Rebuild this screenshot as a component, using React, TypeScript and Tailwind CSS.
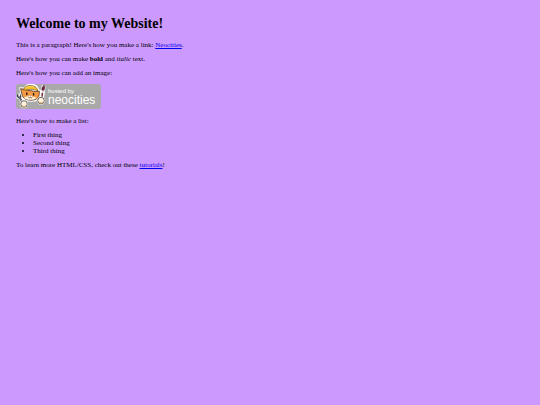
function NeocitiesBadge() {
  return (
    <svg width="85" height="25" viewBox="0 0 85 25" role="img" aria-label="hosted by neocities">
      <rect width="85" height="25" rx="3" fill="#a9a9a9" />

      {/* wrench */}
      <path d="M1.5 10l1 3 2 1 3 5" fill="none" stroke="#fff" strokeWidth="4" strokeLinejoin="round" />
      <path d="M1.5 10.2v2l1.8 1.6 1.9-1.4-.6-2M3.6 13.5l3.6 6" fill="none" stroke="#3c3a48" strokeWidth="1.8" />
      <path d="M2 12.2l1.6 1.2 3.2 5.4" fill="none" stroke="#9293a6" strokeWidth=".8" />

      {/* brush */}
      <path d="M27.4 3l-1.6 12" stroke="#fff" strokeWidth="4.2" strokeLinecap="round" />
      <path d="M28.2 1.2c-1.8 1-2.8 3.2-2.2 5.2l1.8.2c1-1.4 1.2-3.6.4-5.4z" fill="#7a2440" stroke="#2c1a26" strokeWidth=".5" />
      <path d="M26.8 6.5l-.4 3" stroke="#d9c4c4" strokeWidth="1.6" />
      <path d="M26.4 9l-.6 6" stroke="#6e2634" strokeWidth="1.5" />

      {/* head */}
      <path d="M4 4l4.4.4C9.5 1.6 12 .3 15.4.5c3.8.3 6.4 2.6 7 5.6l1.8.4-.4 5.5c-.8 3.6-4.4 5.3-9.4 5-5-.2-8.4-2.6-9-6.6z" fill="#fff" stroke="#fff" strokeWidth="1.6" strokeLinejoin="round" />
      <path d="M4.6 4.6l4.2 1 10.8 2 3.8-.4-.4 4.6c-.8 3-4 4.6-8.8 4.4-4.6-.2-7.6-2.2-8.2-5.6z" fill="#f39a42" stroke="#3a241a" strokeWidth=".7" strokeLinejoin="round" />
      <path d="M8 14c1-1.4 2.8-1.8 4.4-1.4l1.8-2.2 2.2 2.4c1.6-.2 3 .2 4.2 1.2-1.6 1.4-4 1.9-6.4 1.8-2.6-.1-4.8-.6-6.2-1.8z" fill="#fff3dd" />
      <path d="M7.4 5.8C8 3 11 1.2 15 1.5c4 .2 6.4 2.4 6.9 5.5-2.4-1.1-4.6-1.7-7-1.7-2.8 0-4.6 1.1-7.5.5z" fill="#f4c430" stroke="#60401c" strokeWidth=".6" />
      <path d="M10 4c2-1.6 5-2 7.8-1.1" fill="none" stroke="#ffdf6a" strokeWidth=".7" />
      <path d="M10.8 9v1.5M17.6 9.6v1.5" stroke="#21151a" strokeWidth="1.4" strokeLinecap="round" />
      <path d="M13.3 11.6h2l-1 1z" fill="#8a343a" />
      <path d="M12.5 13.4c.8.7 1.5.4 1.8-.2.4.7 1.2.9 1.9.2" fill="none" stroke="#3a241a" strokeWidth=".7" />

      {/* paws */}
      <circle cx="8" cy="20" r="4.2" fill="#fff" />
      <circle cx="8" cy="20" r="3.3" fill="#fff3df" stroke="#33251f" strokeWidth=".7" />
      <path d="M6.2 21.5c.8 1 2.6 1.2 3.6.2" fill="none" stroke="#e9a765" strokeWidth=".9" />
      <circle cx="25" cy="16.6" r="4.2" fill="#fff" />
      <circle cx="25" cy="16.6" r="3.3" fill="#fff3df" stroke="#33251f" strokeWidth=".7" />
      <path d="M23.4 18c.8 1 2.6 1 3.4 0" fill="none" stroke="#e9a765" strokeWidth=".9" />

      <g fill="#fff" fontFamily="'Liberation Sans', Arial, sans-serif">
        <text x="32" y="9" fontSize="6">hosted by</text>
        <text x="32" y="20" fontSize="12">neocities</text>
      </g>
    </svg>
  )
}

export default function App() {
  return (
    <div className="min-h-screen bg-[#cc99ff] px-4 pt-4 font-['Liberation_Serif',serif] text-[7px] leading-[8px] text-black">
      <h1 className="mb-[9px] text-[14px] leading-4 font-bold">Welcome to my Website!</h1>

      <main className="flex flex-col gap-1.5">
        <p>
          This is a paragraph! Here's how you make a link:{" "}
          <a href="https://neocities.org" className="text-[#0000ee] underline">Neocities</a>.
        </p>

        <p>
          Here's how you can make <strong>bold</strong> and <em>italic</em> text.
        </p>

        <p>Here's how you can add an image:</p>

        <div className="pt-px pb-0.5">
          <NeocitiesBadge />
        </div>

        <p>Here's how to make a list:</p>

        <ul className="list-disc pl-[17px]">
          <li>First thing</li>
          <li>Second thing</li>
          <li>Third thing</li>
        </ul>

        <p>
          To learn more HTML/CSS, check out these{" "}
          <a href="https://neocities.org/tutorials" className="text-[#0000ee] underline">tutorials</a>!
        </p>
      </main>
    </div>
  )
}
